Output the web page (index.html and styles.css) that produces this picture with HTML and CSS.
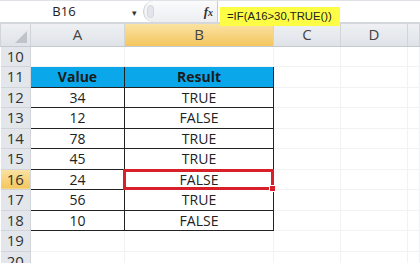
FILE: index.html
```html
<!DOCTYPE html>
<html lang="en">
<head>
  <meta charset="UTF-8">
  <title>IF with TRUE()</title>
  <link rel="stylesheet" href="styles.css">
</head>
<body>
  <div class="formula-bar">
    <div class="name-box">B16</div>
    <div class="name-drop">&#9662;</div>
    <div class="fx-zone">
      <span class="fx-knob"></span>
      <span class="fx">f<small>x</small></span>
    </div>
    <div class="formula-input">
      <span class="formula-text">=IF(A16&gt;30,TRUE())</span>
    </div>
  </div>

  <table class="sheet">
    <colgroup>
      <col class="c-head"><col class="c-a"><col class="c-b"><col class="c-c"><col class="c-d"><col>
    </colgroup>
    <tr class="col-heads">
      <th class="corner"><span class="corner-tri"></span></th>
      <th>A</th><th class="sel">B</th><th>C</th><th>D</th><th></th>
    </tr>
    <tr><th class="rh">10</th><td></td><td></td><td></td><td></td><td></td></tr>
    <tr><th class="rh">11</th><td class="tb hd">Value</td><td class="tb hd">Result</td><td></td><td></td><td></td></tr>
    <tr><th class="rh">12</th><td class="tb">34</td><td class="tb">TRUE</td><td></td><td></td><td></td></tr>
    <tr><th class="rh">13</th><td class="tb">12</td><td class="tb">FALSE</td><td></td><td></td><td></td></tr>
    <tr><th class="rh">14</th><td class="tb">78</td><td class="tb">TRUE</td><td></td><td></td><td></td></tr>
    <tr><th class="rh">15</th><td class="tb">45</td><td class="tb">TRUE</td><td></td><td></td><td></td></tr>
    <tr><th class="rh sel">16</th><td class="tb">24</td><td class="tb active">FALSE</td><td></td><td></td><td></td></tr>
    <tr><th class="rh">17</th><td class="tb">56</td><td class="tb">TRUE</td><td></td><td></td><td></td></tr>
    <tr><th class="rh">18</th><td class="tb">10</td><td class="tb">FALSE</td><td></td><td></td><td></td></tr>
    <tr><th class="rh">19</th><td></td><td></td><td></td><td></td><td></td></tr>
    <tr><th class="rh">20</th><td></td><td></td><td></td><td></td><td></td></tr>
  </table>
</body>
</html>
```

FILE: styles.css
```css
* {
  box-sizing: border-box;
}
body {
  margin: 0;
  background: #fff;
  font-family: "Open Sans", "Liberation Sans", sans-serif;
  color: #222;
  overflow: hidden;
}

/* formula bar */
.formula-bar {
  display: flex;
  height: 24px;
  border-top: 1px solid #dfe3e8;
  border-bottom: 2px solid #d4d8dd;
  background: #fff;
}
.name-box {
  width: 128px;
  text-align: center;
  font-size: 13px;
  line-height: 21px;
}
.name-drop {
  width: 15px;
  padding-left: 4px;
  font-size: 9px;
  line-height: 23px;
  color: #333;
}
.fx-zone {
  flex: 0 0 74px;
  display: flex;
  align-items: center;
  justify-content: space-between;
  background: linear-gradient(#fbfbfc, #eceef1);
  border-radius: 11px 0 0 11px;
  border-left: 1px solid #c8ccd2;
  padding: 0 4px 0 3px;
}
.fx-knob {
  width: 7px;
  height: 13px;
  border-radius: 4px;
  background: #e2e5ea;
  border: 1px solid #d2d6dc;
}
.fx {
  font-family: "Liberation Serif", serif;
  font-style: italic;
  font-weight: bold;
  font-size: 13px;
  color: #333;
}
.fx small {
  font-size: 10px;
}
.formula-input {
  flex: 1;
  border-left: 1px solid #c8ccd2;
  padding: 2px 0 0 2px;
}
.formula-text {
  display: inline-block;
  background: #fdfd45;
  font-family: "Liberation Sans", sans-serif;
  font-size: 11.3px;
  line-height: 19px;
  padding: 0 8px 0 7px;
}

/* grid */
.sheet {
  border-collapse: collapse;
  table-layout: fixed;
  width: 420px;
}
.c-head { width: 30px; }
.c-a { width: 94px; }
.c-b { width: 149px; }
.c-c { width: 67px; }
.c-d { width: 67px; }

.sheet td,
.sheet th {
  padding: 0;
  height: 20.5px;
  font-size: 14px;
  line-height: 17px;
  font-weight: normal;
  text-align: center;
  border: 1px solid #f1f2f3;
}
.col-heads th {
  height: 22px;
  background: linear-gradient(#eef0f3, #dfe3e8);
  color: #444;
  border: 1px solid #d1d5da;
  border-top: 0;
  border-bottom: 1px solid #c5cad0;
  font-size: 15px;
}
.col-heads th.sel {
  background: linear-gradient(#fae2a3, #f4c65d);
}
.corner {
  position: relative;
}
.corner-tri {
  position: absolute;
  right: 3px;
  bottom: 3px;
  border-style: solid;
  border-width: 0 0 12px 12px;
  border-color: transparent transparent #bfc4ca transparent;
}
.sheet th.rh {
  background: #e3e7ec;
  color: #333;
  font-size: 15px;
  border: 1px solid #d1d5da;
  border-left: 0;
}
.sheet th.rh.sel {
  background: linear-gradient(#fae2a3, #f4c65d);
}

/* data table */
.sheet td.tb {
  border: 1px solid #222;
  color: #222;
}
.sheet td.hd {
  background: #0aa8ea;
  font-weight: bold;
  color: #1a1a1a;
}
.sheet td.active {
  position: relative;
}
.sheet td.active::after {
  content: "";
  position: absolute;
  inset: -1px -1px -1px -2px;
  border: 3px solid #d8202a;
}
.sheet td.active::before {
  content: "";
  position: absolute;
  right: -3px;
  bottom: -3px;
  width: 5px;
  height: 5px;
  background: #d8202a;
  border: 1px solid #fff;
  z-index: 1;
}
```
